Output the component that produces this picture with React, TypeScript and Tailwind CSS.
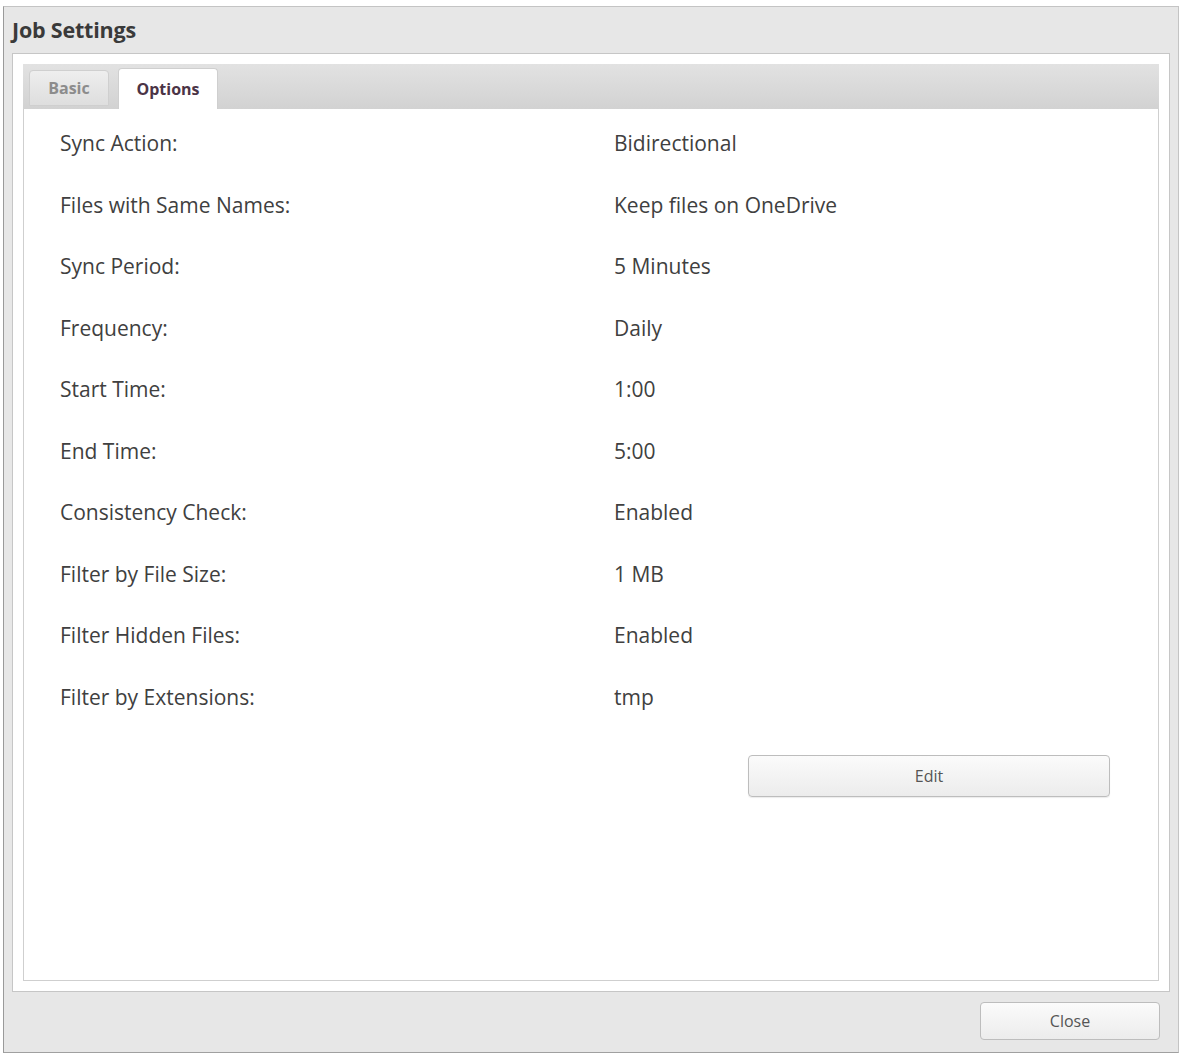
import React from "react";

const rows: [string, string][] = [
  ["Sync Action:", "Bidirectional"],
  ["Files with Same Names:", "Keep files on OneDrive"],
  ["Sync Period:", "5 Minutes"],
  ["Frequency:", "Daily"],
  ["Start Time:", "1:00"],
  ["End Time:", "5:00"],
  ["Consistency Check:", "Enabled"],
  ["Filter by File Size:", "1 MB"],
  ["Filter Hidden Files:", "Enabled"],
  ["Filter by Extensions:", "tmp"],
];

export default function App() {
  return (
    <div className="w-[1182px] h-[1056px] bg-white pt-[6px] pl-[3px]">
      <div className="w-[1176px] h-[1047px] bg-[#e7e7e7] border border-[#c4c4c4] border-l-[#9a9a9a] border-b-[#a0a0a0] flex flex-col">
        <div className="h-[46px] flex items-center pl-[8px]">
          <span className="text-[21.5px] font-bold text-[#3a3a3a] tracking-[-0.2px]" style={{ fontFamily: '"Open Sans", "Noto Sans", sans-serif' }}>
            Job Settings
          </span>
        </div>
        <div className="ml-[8px] w-[1158px] h-[939px] bg-white border border-[#c6c6c6] p-[10px] flex flex-col">
          <div className="h-[45px] bg-gradient-to-b from-[#e2e2e2] to-[#d2d2d2] flex items-end pl-[6px] gap-[9px]">
            <div className="w-[80px] h-[36px] mb-[3px] bg-gradient-to-b from-[#eeeeee] to-[#dedede] border border-[#cfcfcf] rounded-t-[4px] flex items-center justify-center">
              <span className="text-[16px] font-bold text-[#8c8c8c]" style={{ fontFamily: '"Open Sans", "Noto Sans", sans-serif' }}>Basic</span>
            </div>
            <div className="w-[100px] h-[41px] bg-white border border-[#cfcfcf] border-b-0 rounded-t-[4px] flex items-center justify-center">
              <span className="text-[16px] font-bold text-[#4b3446]" style={{ fontFamily: '"Open Sans", "Noto Sans", sans-serif' }}>Options</span>
            </div>
          </div>
          <div className="flex-1 border border-[#cfcfcf] border-t-0 pt-[4px] flex flex-col" style={{ fontFamily: '"Open Sans", "Noto Sans", sans-serif' }}>
            {rows.map(([k, v]) => (
              <div key={k} className="h-[61.5px] flex items-center text-[21px] text-[#404040]">
                <div className="w-[590px] pl-[36px]">{k}</div>
                <div>{v}</div>
              </div>
            ))}
            <div className="flex justify-end pr-[48px] mt-[27px]">
              <button className="w-[362px] h-[42px] rounded-[4px] border border-[#bdbdbd] bg-gradient-to-b from-[#fbfbfb] to-[#ececec] shadow-[0_1px_1px_rgba(0,0,0,0.08)] text-[16px] text-[#555]" style={{ fontFamily: '"Open Sans", "Noto Sans", sans-serif' }}>
                Edit
              </button>
            </div>
          </div>
        </div>
        <div className="flex justify-end pr-[18px] pt-[10px]">
          <button className="w-[180px] h-[38px] rounded-[4px] border border-[#bdbdbd] bg-gradient-to-b from-[#fbfbfb] to-[#ececec] text-[16px] text-[#555]" style={{ fontFamily: '"Open Sans", "Noto Sans", sans-serif' }}>
            Close
          </button>
        </div>
      </div>
    </div>
  );
}
